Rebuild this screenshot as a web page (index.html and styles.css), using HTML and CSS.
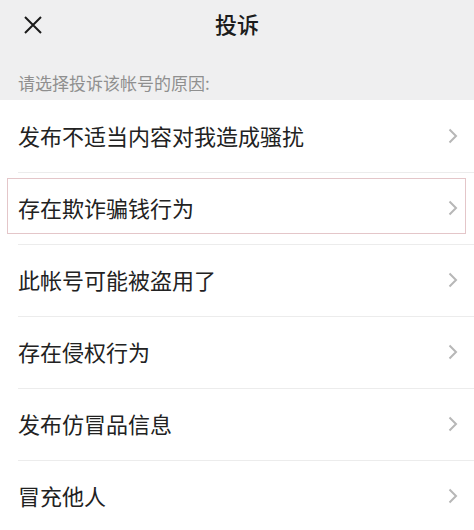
FILE: index.html
```html
<!DOCTYPE html>
<html lang="zh-CN">
<head>
<meta charset="utf-8">
<link rel="stylesheet" href="styles.css">
</head>
<body>
<div class="page">
  <header class="top">
    <div class="navbar">
      <span class="close">
        <svg width="20" height="20" viewBox="0 0 20 20"><path d="M2 2 L18 18 M18 2 L2 18" stroke="#1a1a1a" stroke-width="2" fill="none"/></svg>
      </span>
      <h1 class="title">投诉</h1>
    </div>
    <p class="hint">请选择投诉该帐号的原因:</p>
  </header>
  <ul class="list">
    <li class="item"><span>发布不适当内容对我造成骚扰</span><svg class="chev" width="10" height="16" viewBox="0 0 10 16"><path d="M1.5 1.5 L8 8 L1.5 14.5" stroke="#b7b7b7" stroke-width="2" fill="none"/></svg></li>
    <li class="item active"><span>存在欺诈骗钱行为</span><svg class="chev" width="10" height="16" viewBox="0 0 10 16"><path d="M1.5 1.5 L8 8 L1.5 14.5" stroke="#b7b7b7" stroke-width="2" fill="none"/></svg></li>
    <li class="item"><span>此帐号可能被盗用了</span><svg class="chev" width="10" height="16" viewBox="0 0 10 16"><path d="M1.5 1.5 L8 8 L1.5 14.5" stroke="#b7b7b7" stroke-width="2" fill="none"/></svg></li>
    <li class="item"><span>存在侵权行为</span><svg class="chev" width="10" height="16" viewBox="0 0 10 16"><path d="M1.5 1.5 L8 8 L1.5 14.5" stroke="#b7b7b7" stroke-width="2" fill="none"/></svg></li>
    <li class="item"><span>发布仿冒品信息</span><svg class="chev" width="10" height="16" viewBox="0 0 10 16"><path d="M1.5 1.5 L8 8 L1.5 14.5" stroke="#b7b7b7" stroke-width="2" fill="none"/></svg></li>
    <li class="item"><span>冒充他人</span><svg class="chev" width="10" height="16" viewBox="0 0 10 16"><path d="M1.5 1.5 L8 8 L1.5 14.5" stroke="#b7b7b7" stroke-width="2" fill="none"/></svg></li>
  </ul>
</div>
</body>
</html>
```
FILE: styles.css
```css
html, body {
  margin: 0;
  padding: 0;
  background: #ffffff;
}
body {
  font-family: "Noto Sans CJK SC", "Noto Sans", sans-serif;
  width: 474px;
  height: 530px;
  overflow: hidden;
}
.page {
  display: flex;
  flex-direction: column;
}
.top {
  background: #efeff0;
  height: 100px;
  display: flex;
  flex-direction: column;
}
.navbar {
  position: relative;
  height: 45px;
  display: flex;
  align-items: center;
  justify-content: center;
}
.close {
  position: absolute;
  left: 23px;
  top: 15px;
  width: 20px;
  height: 20px;
  display: flex;
}
.title {
  margin: 0;
  font-size: 22px;
  font-weight: 500;
  color: #1c1c1c;
  line-height: 1;
}
.hint {
  margin: 0;
  padding: 29px 0 0 18px;
  font-size: 17px;
  line-height: 1;
  color: #8f8f8f;
}
.list {
  list-style: none;
  margin: 0;
  padding: 0;
  background: #fff;
}
.item {
  position: relative;
  height: 72px;
  display: flex;
  align-items: center;
  justify-content: space-between;
  padding: 0 16px 0 18px;
  font-size: 22px;
  color: #222;
  box-sizing: border-box;
}
.item + .item::before {
  content: "";
  position: absolute;
  left: 18px;
  right: 0;
  top: 0;
  height: 1px;
  background: #ececec;
}
.item.active::after {
  content: "";
  position: absolute;
  left: 7px;
  right: 8px;
  top: 6px;
  bottom: 10px;
  border: 1px solid #e4c6c9;
}
.item span {
  line-height: 1;
  margin-top: -2px;
}
.chev {
  display: block;
  margin-top: -1px;
}
```
